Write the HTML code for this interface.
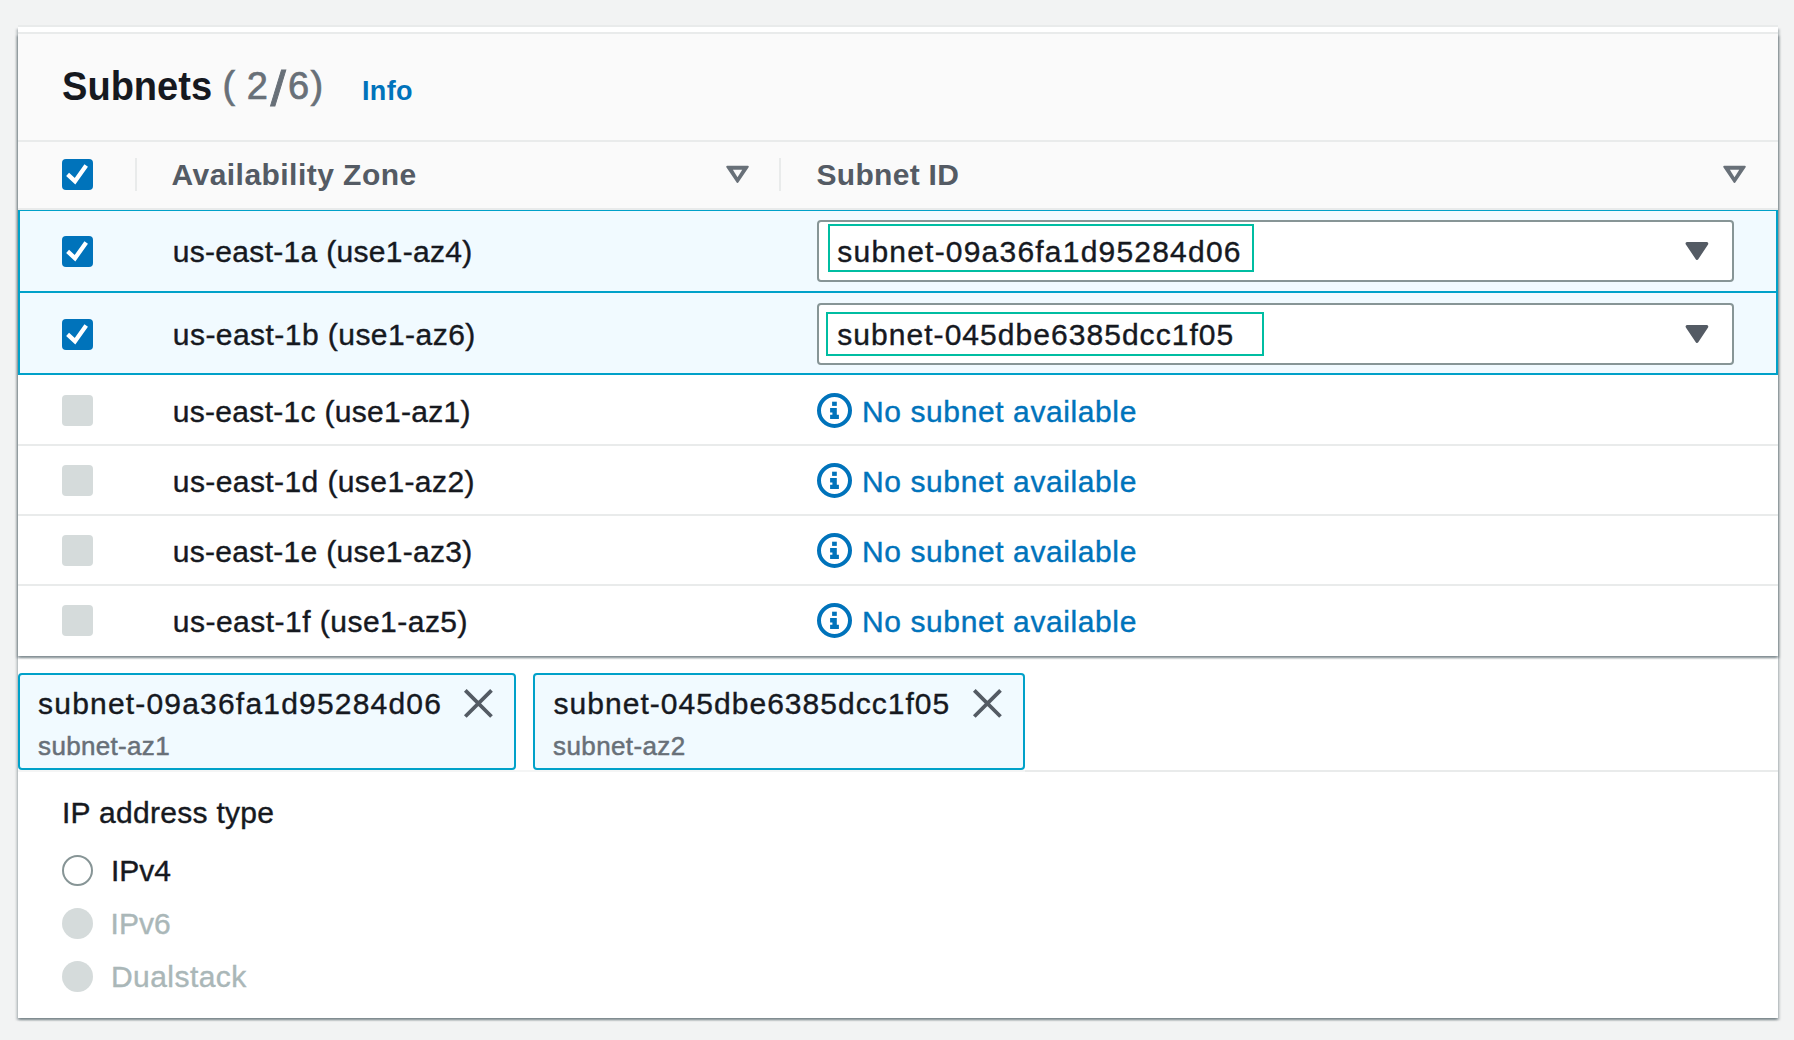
<!DOCTYPE html>
<html><head><meta charset="utf-8">
<style>
html,body{margin:0;padding:0;}
body{width:1794px;height:1040px;background:#f2f3f3;position:relative;overflow:hidden;font-family:"Liberation Sans",sans-serif;}
.a{position:absolute;}
.t{position:absolute;white-space:nowrap;line-height:1;}
.card{left:18px;top:27px;width:1760px;height:991px;background:#fff;box-shadow:0 2px 2px rgba(0,28,36,.3),2px 2px 2px rgba(0,28,36,.15),-2px 2px 2px rgba(0,28,36,.15);}
.tbl{left:18px;top:34px;width:1760px;height:622px;background:#fff;box-shadow:0 2px 2px rgba(0,28,36,.3),2px 2px 2px rgba(0,28,36,.15),-2px 2px 2px rgba(0,28,36,.15);}
.hdr{left:18px;top:34px;width:1760px;height:176px;background:#fafafa;}
.line{background:#e9ebeb;}
.sel{background:#f1faff;border:2px solid #00a1c9;box-sizing:border-box;}
.cb{width:31px;height:31px;border-radius:4px;background:#0073bb;}
.cbd{width:31px;height:31px;border-radius:4px;background:#d5dbdb;}
.body{font-size:30px;color:#16191f;-webkit-text-stroke:0.4px currentColor;}
.row{letter-spacing:0.3px;}
.hd{font-size:30px;font-weight:700;color:#545b64;}
.gp{font-size:38px;color:#687078;-webkit-text-stroke:0.7px currentColor;}
.link{font-size:30px;color:#0073bb;letter-spacing:0.6px;-webkit-text-stroke:0.4px currentColor;}
.select{background:#fff;border:2px solid #879596;border-radius:4px;box-sizing:border-box;}
.focus{border:2px solid #00bda2;box-sizing:border-box;}
.token{background:#f1faff;border:2px solid #00a1c9;border-radius:4px;box-sizing:border-box;}
</style></head>
<body>
<div class="a" style="left:18px;top:25px;width:1760px;height:2px;background:#e9ebeb;"></div>
<div class="a card"></div>
<div class="a tbl"></div>
<div class="a line" style="left:18px;top:32px;width:1760px;height:2px;"></div>
<div class="a hdr"></div>
<!-- title -->
<div class="t" style="left:61.8px;top:65px;font-size:41.5px;font-weight:700;color:#16191f;transform:scaleX(0.917);transform-origin:0 0;">Subnets</div>
<div class="t gp" style="left:222.5px;top:65.5px;">(</div><div class="t gp" style="left:246.8px;top:67px;">2</div><div class="t gp" style="left:272.7px;top:65.5px;transform:translateY(3.6px) scale(1.45,1.3);">/</div><div class="t gp" style="left:288px;top:67px;">6</div><div class="t gp" style="left:310.5px;top:65.5px;">)</div>
<div class="t" style="left:362px;top:78px;font-size:27px;font-weight:700;color:#0073bb;letter-spacing:0.35px;">Info</div>
<div class="a line" style="left:18px;top:140px;width:1760px;height:2px;"></div>
<!-- column header -->
<div class="a cb" style="left:62px;top:159px;"><svg width="31" height="31"><polyline points="5.6,15.4 13,22.2 24.2,6.6" fill="none" stroke="#fff" stroke-width="4.3"/></svg></div>
<div class="a line" style="left:135px;top:158px;width:2px;height:33px;"></div>
<div class="t hd" style="left:171.5px;top:159.9px;letter-spacing:0.46px;">Availability Zone</div>
<svg class="a" style="left:724px;top:163px" width="28" height="24"><path d="M3.2,3.8 H23.8 L13.5,18.9 Z" fill="#687078" stroke="#687078" stroke-width="2" stroke-linejoin="round"/><path d="M8.9,6.8 H18.2 L13.5,14.2 Z" fill="#fafafa"/></svg>
<div class="a line" style="left:779px;top:158px;width:2px;height:33px;"></div>
<div class="t hd" style="left:816.5px;top:160px;letter-spacing:0.3px;">Subnet ID</div>
<svg class="a" style="left:1720.5px;top:163px" width="28" height="24"><path d="M3.2,3.8 H23.8 L13.5,18.9 Z" fill="#687078" stroke="#687078" stroke-width="2" stroke-linejoin="round"/><path d="M8.9,6.8 H18.2 L13.5,14.2 Z" fill="#fafafa"/></svg>
<div class="a line" style="left:18px;top:208px;width:1760px;height:2px;"></div>

<!-- selected rows -->
<div class="a sel" style="left:18px;top:210px;width:1760px;height:83px;border-top-width:1.2px;"></div>
<div class="a sel" style="left:18px;top:291px;width:1760px;height:84px;"></div>

<div class="a cb" style="left:62px;top:236px;"><svg width="31" height="31"><polyline points="5.6,15.4 13,22.2 24.2,6.6" fill="none" stroke="#fff" stroke-width="4.3"/></svg></div>
<div class="t body row" style="left:172.8px;top:236.9px;">us-east-1a (use1-az4)</div>
<div class="a select" style="left:817px;top:220px;width:917px;height:62px;"></div>
<div class="a focus" style="left:828px;top:224px;width:426px;height:48px;"></div>
<div class="t body" style="left:837.3px;top:237px;letter-spacing:1.21px;">subnet-09a36fa1d95284d06</div>
<svg class="a" style="left:1684px;top:240px" width="26" height="22"><path d="M3.1,3.6 H22.8 L13,18.4 Z" fill="#545b64" stroke="#545b64" stroke-width="3" stroke-linejoin="round"/></svg>

<div class="a cb" style="left:62px;top:319px;"><svg width="31" height="31"><polyline points="5.6,15.4 13,22.2 24.2,6.6" fill="none" stroke="#fff" stroke-width="4.3"/></svg></div>
<div class="t body row" style="letter-spacing:0.45px;left:172.8px;top:319.6px;">us-east-1b (use1-az6)</div>
<div class="a select" style="left:817px;top:303px;width:917px;height:62px;"></div>
<div class="a focus" style="left:826px;top:312px;width:438px;height:44px;"></div>
<div class="t body" style="left:837.3px;top:319.5px;letter-spacing:1.04px;">subnet-045dbe6385dcc1f05</div>
<svg class="a" style="left:1684px;top:323px" width="26" height="22"><path d="M3.1,3.6 H22.8 L13,18.4 Z" fill="#545b64" stroke="#545b64" stroke-width="3" stroke-linejoin="round"/></svg>

<!-- unselected rows -->
<div class="a line" style="left:18px;top:444px;width:1760px;height:2px;"></div>
<div class="a line" style="left:18px;top:514px;width:1760px;height:2px;"></div>
<div class="a line" style="left:18px;top:584px;width:1760px;height:2px;"></div>

<div class="a cbd" style="left:62px;top:395px;"></div>
<div class="t body row" style="left:172.8px;top:397px;">us-east-1c (use1-az1)</div>
<div class="a cbd" style="left:62px;top:465px;"></div>
<div class="t body row" style="letter-spacing:0.41px;left:172.8px;top:467px;">us-east-1d (use1-az2)</div>
<div class="a cbd" style="left:62px;top:535px;"></div>
<div class="t body row" style="left:172.8px;top:537px;">us-east-1e (use1-az3)</div>
<div class="a cbd" style="left:62px;top:605px;"></div>
<div class="t body row" style="letter-spacing:0.48px;left:172.8px;top:607px;">us-east-1f (use1-az5)</div>

<!-- info icons -->
<svg class="a" style="left:817px;top:393px" width="35" height="35"><circle cx="17.5" cy="17.5" r="15.5" fill="none" stroke="#0073bb" stroke-width="4"/><rect x="15.1" y="8.7" width="4.7" height="4.2" fill="#0073bb"/><path d="M13.1,15.1 H19.8 V21.8 H21.9 V26 H13.1 V21.8 H15.4 V19.5 H13.1 Z" fill="#0073bb"/></svg>
<div class="t link" style="left:862px;top:397px;">No subnet available</div>
<svg class="a" style="left:817px;top:463px" width="35" height="35"><circle cx="17.5" cy="17.5" r="15.5" fill="none" stroke="#0073bb" stroke-width="4"/><rect x="15.1" y="8.7" width="4.7" height="4.2" fill="#0073bb"/><path d="M13.1,15.1 H19.8 V21.8 H21.9 V26 H13.1 V21.8 H15.4 V19.5 H13.1 Z" fill="#0073bb"/></svg>
<div class="t link" style="left:862px;top:467px;">No subnet available</div>
<svg class="a" style="left:817px;top:533px" width="35" height="35"><circle cx="17.5" cy="17.5" r="15.5" fill="none" stroke="#0073bb" stroke-width="4"/><rect x="15.1" y="8.7" width="4.7" height="4.2" fill="#0073bb"/><path d="M13.1,15.1 H19.8 V21.8 H21.9 V26 H13.1 V21.8 H15.4 V19.5 H13.1 Z" fill="#0073bb"/></svg>
<div class="t link" style="left:862px;top:537px;">No subnet available</div>
<svg class="a" style="left:817px;top:603px" width="35" height="35"><circle cx="17.5" cy="17.5" r="15.5" fill="none" stroke="#0073bb" stroke-width="4"/><rect x="15.1" y="8.7" width="4.7" height="4.2" fill="#0073bb"/><path d="M13.1,15.1 H19.8 V21.8 H21.9 V26 H13.1 V21.8 H15.4 V19.5 H13.1 Z" fill="#0073bb"/></svg>
<div class="t link" style="left:862px;top:607px;">No subnet available</div>

<!-- table bottom shadow -->


<!-- tokens -->
<div class="a token" style="left:18px;top:673px;width:498px;height:97px;"></div>
<div class="t body" style="left:38.1px;top:689px;letter-spacing:1.19px;">subnet-09a36fa1d95284d06</div>
<div class="t" style="left:38.1px;top:733px;font-size:26px;color:#687078;letter-spacing:0.32px;-webkit-text-stroke:0.5px currentColor;">subnet-az1</div>
<svg class="a" style="left:463px;top:688px" width="31" height="31"><path d="M2.3,2.3 L28.5,28.5 M28.5,2.3 L2.3,28.5" stroke="#545b64" stroke-width="3.8"/></svg>
<div class="a token" style="left:533px;top:673px;width:492px;height:97px;"></div>
<div class="t body" style="left:553.6px;top:689px;letter-spacing:1.03px;">subnet-045dbe6385dcc1f05</div>
<div class="t" style="left:553.1px;top:733px;font-size:26px;color:#687078;letter-spacing:0.38px;-webkit-text-stroke:0.5px currentColor;">subnet-az2</div>
<svg class="a" style="left:972px;top:688px" width="31" height="31"><path d="M2.3,2.3 L28.5,28.5 M28.5,2.3 L2.3,28.5" stroke="#545b64" stroke-width="3.8"/></svg>
<div class="a line" style="left:1025px;top:770px;width:753px;height:2px;"></div>
<div class="a line" style="left:18px;top:770px;width:1007px;height:2px;opacity:.5"></div>

<!-- IP address type -->
<div class="t body" style="left:62px;top:797.8px;letter-spacing:0.29px;">IP address type</div>
<div class="a" style="left:62px;top:855px;width:31px;height:31px;border-radius:50%;border:2px solid #879596;box-sizing:border-box;background:#fff;"></div>
<div class="t body" style="left:111px;top:856.2px;">IPv4</div>
<div class="a" style="left:62px;top:908px;width:31px;height:31px;border-radius:50%;background:#d5dbdb;"></div>
<div class="t body" style="left:110.5px;top:908.8px;color:#aab7b8;letter-spacing:0.07px;">IPv6</div>
<div class="a" style="left:62px;top:961px;width:31px;height:31px;border-radius:50%;background:#d5dbdb;"></div>
<div class="t body" style="left:111px;top:961.5px;color:#aab7b8;letter-spacing:0.44px;">Dualstack</div>
</body></html>
